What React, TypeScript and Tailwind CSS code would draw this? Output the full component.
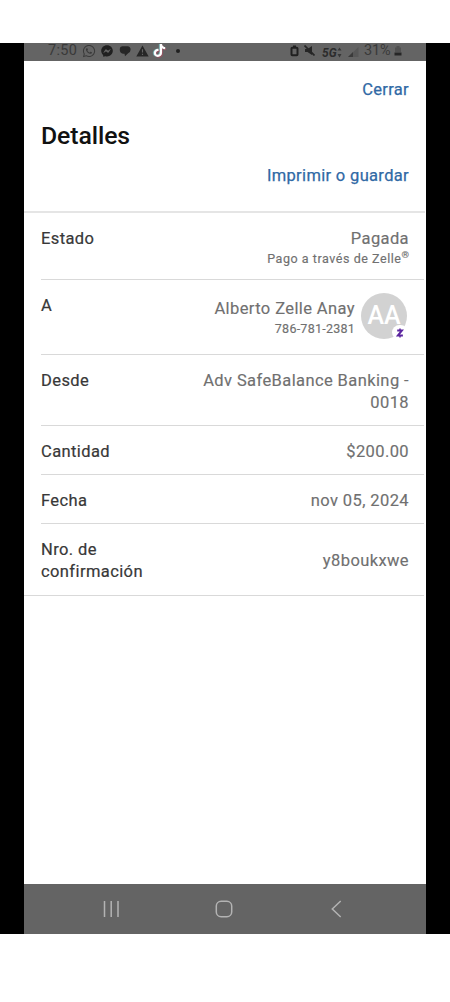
import type { ReactNode } from "react";
import { FaWhatsapp, FaFacebookMessenger, FaTiktok } from "react-icons/fa";

type RowProps = {
  label: ReactNode;
  children: ReactNode;
  className?: string;
};

function Row({ label, children, className = "" }: RowProps) {
  return (
    <div
      className={`flex justify-between ml-[17px] pr-[15px] pt-[15px] border-b border-[#d9d9d9] text-[16.5px] leading-[22px] tracking-[0.4px] ${className}`}
    >
      <div className="text-[#383838] [-webkit-text-stroke:0.2px_#383838]">{label}</div>
      <div className="text-right text-[#707070] [-webkit-text-stroke:0.15px_#707070]">{children}</div>
    </div>
  );
}

function StatusBar() {
  return (
    <div className="flex justify-between h-[18px] bg-[#646464] text-[#3a3a3a] pl-[24px] pr-[24px] overflow-hidden">
      <div className="flex items-center h-[15px]">
        <span className="text-[14.5px] leading-[15px] w-[34px] tracking-[0.3px]">7:50</span>
        <FaWhatsapp size={14} />
        <FaFacebookMessenger size={12} className="ml-[5px] text-[#202020]" />
        {/* Chat bubble */}
        <svg width="12" height="12" viewBox="0 0 12 12" className="ml-[6px]" fill="#262626">
          <path d="M0.8 3.8Q0.8 1.3 3.2 1.3H8.5Q11.6 1.5 11.6 4.5Q11.6 7 9.4 8L6 11.2L5.5 8.7H4Q0.8 8 0.8 5Z" />
        </svg>
        {/* Warning */}
        <svg width="13" height="12" viewBox="0 0 13 12" className="ml-[5px]">
          <path d="M6.5 0.5L12.7 11.5H0.3Z" fill="#262626" />
          <path d="M6.5 4.3V7.6M6.5 8.7V10" stroke="#646464" strokeWidth="1.1" />
        </svg>
        <span className="relative ml-[4px] w-[13px] h-[14px]">
          <FaTiktok size={13} className="absolute left-[-1px] top-0 text-[#6fa9aa]" />
          <FaTiktok size={13} className="absolute left-[1px] top-[1px] text-[#8f5562]" />
          <FaTiktok size={13} className="absolute left-0 top-0 text-white" />
        </span>
        <span className="ml-[10px] w-1 h-1 rounded-full bg-[#202020]" />
      </div>

      <div className="flex items-center h-[15px]">
        {/* Battery saver */}
        <svg width="9" height="12" viewBox="0 0 9 12" fill="none">
          <path d="M3 1.5H6" stroke="#202020" strokeWidth="2" />
          <rect x="1.5" y="2.7" width="6" height="7.6" rx="0.8" stroke="#202020" strokeWidth="2" />
        </svg>
        {/* Muted */}
        <svg width="11" height="11" viewBox="0 0 11 11" className="ml-[5px]">
          <path d="M1 4H3.5L8 1V10L3.5 7H1Z" fill="#262626" />
          <path d="M0.5 0.5L10.5 10.5" stroke="#262626" strokeWidth="1.7" />
        </svg>
        <span className="flex ml-[7px] mt-[4px] w-[21px] text-[12px] leading-[12px] font-bold italic text-[#2c2c2c]">
          5G
          {/* Data arrows */}
          <svg width="5" height="12" viewBox="0 0 5 12" fill="#363636">
            <path d="M0.5 3.5L2.5 0.5L4.5 3.5ZM0.5 7L2.5 10.5L4.5 7Z" />
          </svg>
        </span>
        <svg width="11" height="10" viewBox="0 0 11 10" className="ml-[5px] mt-[2px]">
          <path d="M10.5 0V10H0Z" fill="#575757" />
          <path d="M5 5V10H0Z" fill="#3a3a3a" />
        </svg>
        <span className="ml-[5px] text-[14.5px] w-[28px] leading-[15px] tracking-[-0.1px]">31%</span>
        <svg width="8" height="12" viewBox="0 0 8 12" className="ml-[2px]">
          <path d="M2.5 1H5.5V2.5H7V7H1V2.5H2.5Z" fill="#505050" />
          <path d="M0.5 7.5H7.5V10.5H0.5Z" fill="#262626" />
        </svg>
      </div>
    </div>
  );
}

function Avatar() {
  return (
    <div className="relative w-[46px] h-[46px] rounded-full bg-[#d2d2d2] flex items-center justify-center text-white text-[25px] font-medium tracking-normal [-webkit-text-stroke:0]">
      AA
      <span className="absolute left-[31px] top-[32px] w-[16px] h-[15px] rounded-full bg-white flex items-center justify-center">
        <svg width="8" height="12" viewBox="0 0 8 12" fill="none" stroke="#5b259f">
          <path d="M1.2 3.4H6L2 8.4H6.9" strokeWidth="2" />
          <path d="M4 1.5V3M4 9V10.5" strokeWidth="1.5" />
        </svg>
      </span>
    </div>
  );
}

function NavBar() {
  return (
    <div className="h-[50px] bg-[#646464] flex items-center pl-[79px]">
      <svg width="17" height="18" viewBox="0 0 17 18" stroke="#b3b3b3" strokeWidth="1.5">
        <path d="M1.5 1V17M8.2 1V17M15 1V17" />
      </svg>
      <svg width="18" height="18" viewBox="0 0 18 18" fill="none" stroke="#b3b3b3" strokeWidth="1.5" className="ml-[95px]">
        <rect x="1.3" y="1.3" width="15.4" height="15.4" rx="4.8" />
      </svg>
      <svg width="11" height="18" viewBox="0 0 11 18" fill="none" stroke="#b3b3b3" strokeWidth="1.5" className="ml-[98px]">
        <path d="M9.7 1L1.3 9L9.7 17" />
      </svg>
    </div>
  );
}

export default function App() {
  return (
    <div className="w-[450px] h-[1002px] bg-white pt-[43px] pb-[68px] font-[Roboto,sans-serif]">
      <div className="h-[891px] bg-black px-6">
        <div className="h-full flex flex-col bg-white">
          <StatusBar />

          <div className="flex-1">
            {/* Header */}
            <div className="h-[152px] border-b-2 border-[#e5e5e5] mr-[1px] pl-[17px] pr-[16px] pt-[18px]">
              <div className="text-right text-[16.5px] leading-[22px] tracking-[0.3px] text-[#3069a5] [-webkit-text-stroke:0.25px_#3069a5]">
                Cerrar
              </div>
              <h1 className="mt-[20px] text-[24.8px] leading-[30px] font-medium text-[#111] tracking-[-0.1px]">Detalles</h1>
              <div className="mt-[14px] text-right text-[16.5px] leading-[22px] tracking-[0.33px] text-[#3069a5] [-webkit-text-stroke:0.25px_#3069a5]">
                Imprimir o guardar
              </div>
            </div>

            {/* Payment details */}
            <div className="border-b border-[#d9d9d9] mr-[2px]">
              <Row label="Estado" className="h-[67px]">
                <p>Pagada</p>
                <p className="text-[12.5px] leading-[18px] tracking-[0.55px]">
                  Pago a través de Zelle<sup className="text-[9.5px] tracking-normal">®</sup>
                </p>
              </Row>
              <Row label="A" className="h-[75px]">
                <div className="flex -mt-[2px] mr-[2px]">
                  <div className="mt-[5px] mr-[6px]">
                    <p>Alberto Zelle Anay</p>
                    <p className="text-[12.5px] leading-[18px] tracking-[0.25px]">786-781-2381</p>
                  </div>
                  <Avatar />
                </div>
              </Row>
              <Row label="Desde" className="h-[71px]">
                Adv SafeBalance Banking -<br />
                0018
              </Row>
              <Row label="Cantidad" className="h-[49px]">
                $200.00
              </Row>
              <Row label="Fecha" className="h-[49px]">
                nov 05, 2024
              </Row>
              <Row label={<>Nro. de<br />confirmación</>} className="h-[71px] border-b-0">
                <p className="pt-[11px]">y8boukxwe</p>
              </Row>
            </div>
          </div>

          <NavBar />
        </div>
      </div>
    </div>
  );
}
